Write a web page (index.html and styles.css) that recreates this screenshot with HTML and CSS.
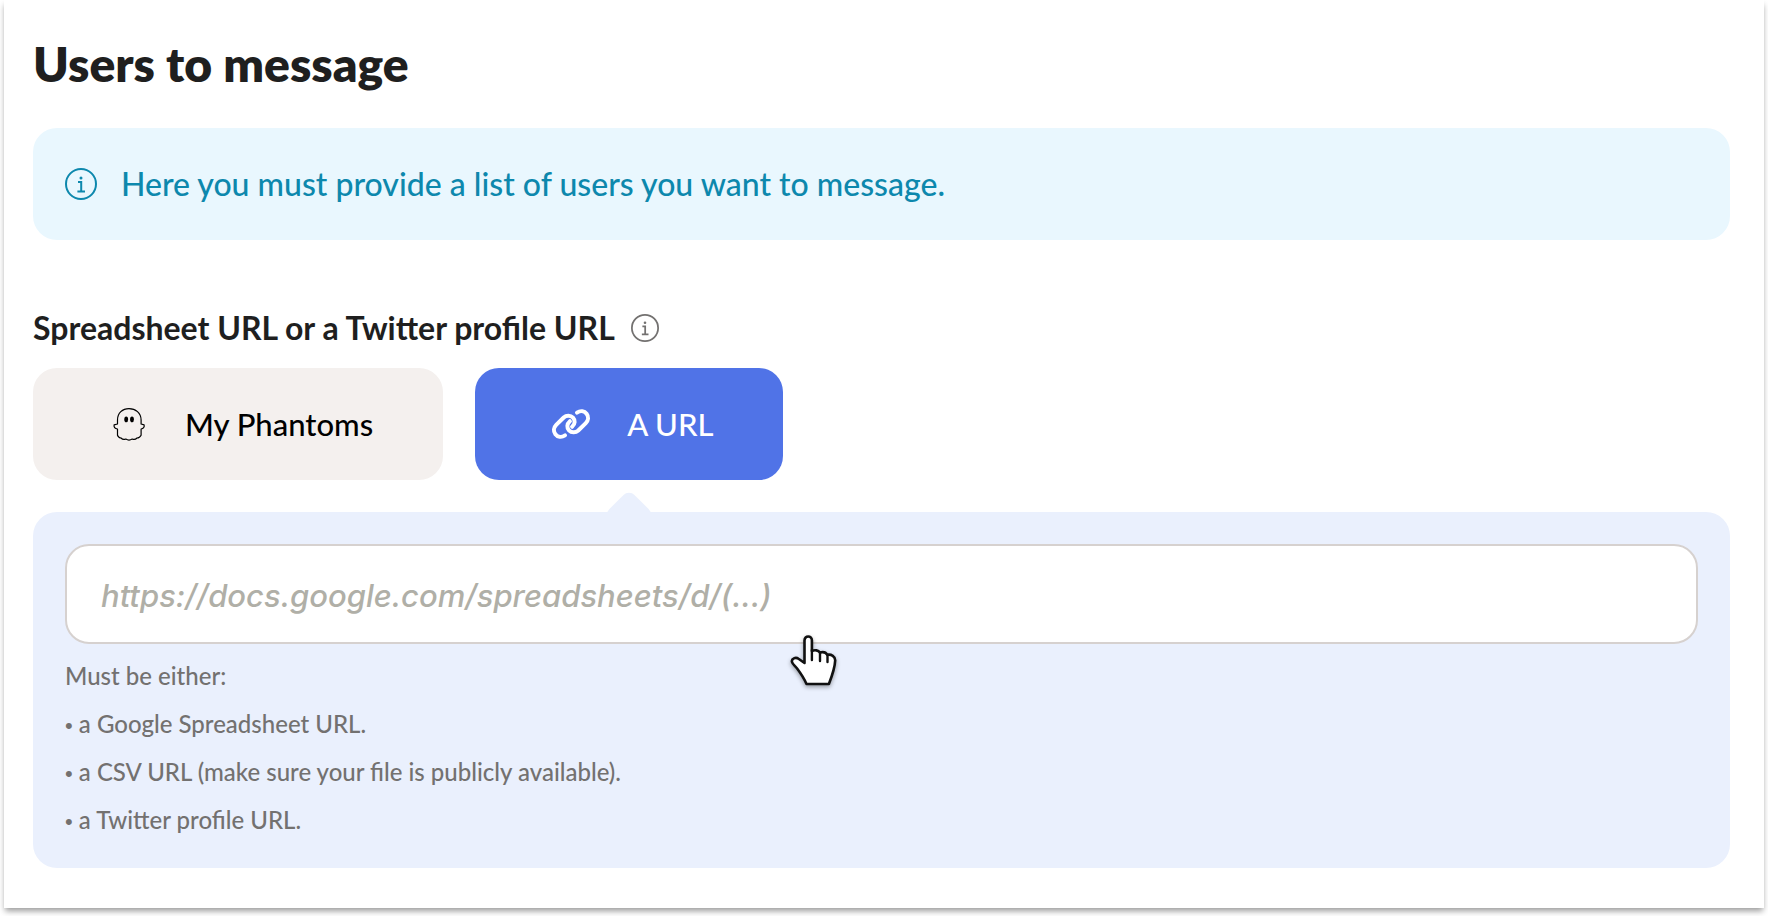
FILE: index.html
```
<!DOCTYPE html>
<html lang="en">
<head>
    <meta charset="utf-8">
    <title>Users to message</title>
    <link rel="stylesheet" href="styles.css">
</head>
<body>
    <main class="card">
        <h1>Users to message</h1>

        <div class="notice">
            <svg class="notice-icon" viewBox="0 0 32 32" fill="none" stroke="currentColor" stroke-width="2">
                <circle cx="16" cy="16" r="15"/>
                <path d="M13 14h3.2v9M12.4 23.4h7.6"/>
                <circle cx="16" cy="10" r="1.5" fill="currentColor" stroke="none"/>
            </svg>
            <p>Here you must provide a list of users you want to message.</p>
        </div>

        <form>
            <div class="field-title">
                <label for="url">Spreadsheet URL or a Twitter profile URL</label>
                <svg class="info-icon" viewBox="0 0 32 32" fill="none" stroke="currentColor" stroke-width="2">
                    <circle cx="16" cy="16" r="15"/>
                    <path d="M13 14h3.2v9M12.4 23.4h7.6"/>
                    <circle cx="16" cy="10" r="1.5" fill="currentColor" stroke="none"/>
                </svg>
            </div>

            <div class="source-buttons">
                <button type="button" class="source">
                    <svg class="source-icon" viewBox="0 0 48 48" fill="none" stroke="currentColor" stroke-width="1.2" stroke-linejoin="round">
                        <path d="M12.500 24v-4C12.500 13 17.500 8.600 24 8.600S36.100 13 36.100 20v4l3 .8c.6 2.200-.8 3.800-3 4.200v6.200c-1 2-2.300 2.800-4.100 2.800-1.400 1.500-3.200 1.800-4.800 1-1.700 1.100-4.700 1.100-6.400 0-1.600.8-3.400.5-4.800-1-1.800 0-2.600-.8-3.500-2.800V29c-2.700-.4-3.800-2-3.400-4.200z"/>
                        <ellipse cx="21.200" cy="19.400" rx="1.900" ry="2.800" fill="currentColor" stroke="none"/>
                        <ellipse cx="27" cy="19.400" rx="1.900" ry="2.800" fill="currentColor" stroke="none"/>
                    </svg>
                    <span>My Phantoms</span>
                </button>
                <button type="button" class="source active">
                    <svg class="source-icon" viewBox="0 0 48 48" fill="none" stroke="currentColor" stroke-width="4" stroke-linecap="round">
                        <path d="M18 35.400c-3.500 2.300-7.500 1.600-9.600-1.200-2.300-3-1.800-6.700.8-9.300l7.500-7.400c2.700-2.500 6.800-2.500 9.300.2 2.300 2.500 2.300 6.300-.9 9.100"/>
                        <path d="M30 12.600c3.500-2.300 7.500-1.600 9.600 1.200 2.300 3 1.800 6.700-.8 9.300l-7.500 7.400c-2.700 2.500-6.800 2.500-9.300-.2-2.300-2.500-2.300-6.300.9-9.100"/>
                    </svg>
                    <span>A URL</span>
                </button>
            </div>

            <div class="panel">
                <div class="input-wrap">
                    <input type="text" id="url" placeholder="https://docs.google.com/spreadsheets/d/(...)">
                    <svg class="pointer" viewBox="0 0 48 54">
                        <path d="M14.500 29V6.500c0-5.400 7.400-5.400 7.400 0V17c2.800-1.400 6.500-.8 8 1.600 2.800-.9 6-.2 7.400 2.200 4-.8 8 1.600 7.900 5.600-.3 8-3.200 15.600-6.300 23.600H16.500c-2.500-5.800-5.800-10.700-9.400-15.500-1.700-2.300-4.500-4-5.100-6.500-.9-3.500 3.800-5.200 6.500-3.200z" fill="#fff" stroke="#111" stroke-width="2.600" stroke-linejoin="round"/>
                        <path d="M21.900 16v10M30 18.500V27M37.500 21v7" fill="none" stroke="#111" stroke-width="2.400" stroke-linecap="round"/>
                    </svg>
                </div>
                <div class="help">
                    <p>Must be either:</p>
                    <p><span class="bullet">• </span>a Google Spreadsheet URL.</p>
                    <p><span class="bullet">• </span>a CSV URL (make sure your file is publicly available).</p>
                    <p><span class="bullet">• </span>a Twitter profile URL.</p>
                </div>
            </div>
        </form>
    </main>
</body>
</html>
```
FILE: styles.css
```
body { margin: 0; background: #fff; font-family: Lato, "Liberation Sans", sans-serif; font-size: 32px; font-weight: 500; color: #1f1f1f; }
h1, p { margin: 0; }
button, input { font: inherit; }

.card { margin: 0 4px 8px; padding: 32px 34px 40px 29px; background: #fff; box-shadow: 0 4px 6px -1px rgba(0, 0, 0, 0.4); }
h1 { font-size: 48px; line-height: 64px; font-weight: 800; }

.notice { display: flex; align-items: center; gap: 24px; margin-top: 32px; padding: 32px; border-radius: 24px; background: #e9f7fe; color: #0d88ad; line-height: 48px; }
.notice-icon { width: 32px; height: 32px; flex: none; }

.field-title { display: flex; align-items: center; gap: 16px; margin-top: 64px; line-height: 48px; font-weight: 700; }
.info-icon { width: 28px; height: 28px; color: #737170; }

.source-buttons { display: flex; gap: 32px; margin-top: 16px; }
.source { position: relative; display: flex; align-items: center; gap: 32px; padding: 32px 70px 32px 72px; border: none; border-radius: 24px; background: #f4f0ee; color: #000; font-size: 31px; line-height: 48px; cursor: pointer; }
.source-icon { width: 48px; height: 48px; }
.source.active { background: #5073e7; color: #fff; }
/* arrow joining the active tab to the panel */
.source.active::after { content: ""; position: absolute; left: 50%; bottom: -53px; width: 36px; height: 36px; margin-left: -18px; border-radius: 8px; background: #eaf0fd; transform: rotate(45deg); }

.panel { margin-top: 32px; padding: 32px 32px 24px; border-radius: 24px; background: #eaf0fd; }
.input-wrap { position: relative; }
input { display: block; box-sizing: border-box; width: 100%; height: 100px; padding: 0 34px; border: 2px solid #d6d1cf; border-radius: 24px; background: #fff; color: #1f1f1f; }
input::placeholder { color: #b0afa7; font-family: Inter, sans-serif; font-size: 31px; font-weight: 500; font-style: italic; opacity: 1; }
.pointer { position: absolute; left: 725px; top: 90px; width: 48px; height: 54px; filter: drop-shadow(0 2px 2px rgba(0, 0, 0, 0.35)); }

.help { margin-top: 8px; font-size: 24px; line-height: 48px; color: #737170; }
.bullet { font-family: "Liberation Sans", sans-serif; font-size: 22px; line-height: 1; }
```
